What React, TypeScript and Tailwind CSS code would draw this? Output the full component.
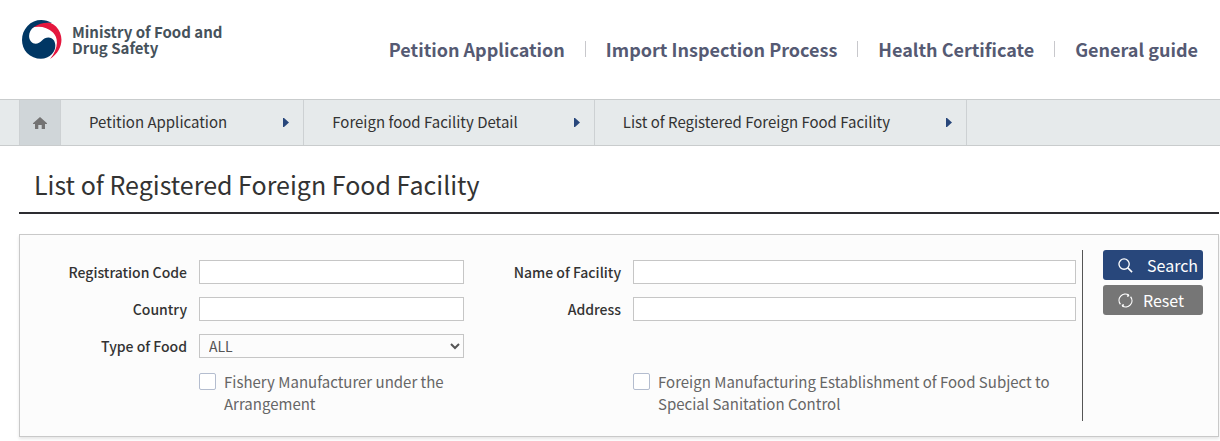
import type { ReactNode } from "react";

const navItems = [
  "Petition Application",
  "Import Inspection Process",
  "Health Certificate",
  "General guide",
];

const crumbs = [
  "Petition Application",
  "Foreign food Facility Detail",
  "List of Registered Foreign Food Facility",
];

const inputClass =
  "h-6 w-full rounded-none border border-[#c6c6c6] bg-white px-2 text-[15px] text-[#555]";

function Logo() {
  return (
    <a href="#" className="flex items-center gap-2.5">
      <svg viewBox="0 0 40 40" className="size-10 shrink-0" aria-hidden="true">
        <path
          d="M9 8C15 1 27-.5 34 6.500c8.500 8.500 7.500 24-6 32.500 7.500-9 9.500-20 3-26.500C25 6.500 16 5.500 9 8z"
          fill="#e4173e"
        />
        <path
          d="M30 3C22-1.500 12-1 5.500 6-2 14-1.500 26 5 33c7 7 19 8 25 1 4-4 4-10 2-13.500-3-4.500-9-3.500-12 0-3 3.500-8 4.500-11 1C5.500 17 7 10.500 12 7c5-4 12-5 18-4z"
          fill="#003764"
        />
      </svg>
      <span className="text-[15px] leading-4 font-bold text-[#46525b]">
        Ministry of Food and
        <br />
        Drug Safety
      </span>
    </a>
  );
}

function Header() {
  return (
    <header className="flex h-[99px] items-start justify-between px-[22px]">
      <div className="pt-5">
        <Logo />
      </div>
      <nav className="flex items-center pt-[34px]">
        {navItems.map((item, i) => (
          <div key={item} className="flex items-center">
            {i > 0 && <span className="mx-5 h-4 w-px bg-[#c8c8cc]" />}
            <a href="#" className="text-[18px] leading-[30px] font-bold text-[#555a73]">
              {item}
            </a>
          </div>
        ))}
      </nav>
    </header>
  );
}

function Breadcrumb() {
  return (
    <nav
      aria-label="Breadcrumb"
      className="flex h-[47px] border-y border-[#c9cccd] bg-[#e6eaeb] pl-[19px]"
    >
      <a
        href="#"
        aria-label="Home"
        className="flex w-[42px] items-center justify-center border-x border-[#cdd1d3] bg-[#d0d6d9]"
      >
        <svg viewBox="0 0 14 12" className="h-3 w-3.5" aria-hidden="true">
          <path d="M7 0l7 6.300v.7h-2v5H8.700V8H5.300v4H2V7H0v-.7z" fill="#737373" />
        </svg>
      </a>
      {crumbs.map((crumb) => (
        <a
          key={crumb}
          href="#"
          className="flex items-center border-r border-[#cdd1d3] pr-3.5 pl-7 text-[15px] text-[#333]"
        >
          {crumb}
          <svg viewBox="0 0 6 9" className="ml-14 h-[9px] w-1.5" aria-hidden="true">
            <path d="M0 0h1l5 4.500L1 9H0z" fill="#28477b" />
          </svg>
        </a>
      ))}
    </nav>
  );
}

function FieldLabel({ htmlFor, children }: { htmlFor: string; children: ReactNode }) {
  return (
    <label
      htmlFor={htmlFor}
      className="text-right text-[14px] leading-6 font-medium text-[#333]"
    >
      {children}
    </label>
  );
}

function CheckField({ id, children }: { id: string; children: ReactNode }) {
  return (
    <div className="flex items-start gap-2">
      <input
        id={id}
        type="checkbox"
        className="mt-0.5 size-[17px] shrink-0 appearance-none rounded-xs border border-[#b4bdcf] bg-white checked:bg-[#28477b]"
      />
      <label htmlFor={id} className="text-[15px] leading-[22px] text-[#666]">
        {children}
      </label>
    </div>
  );
}

function SearchPanel() {
  return (
    <form className="mt-5 flex border border-[#c9c9c9] bg-[#fcfcfc] p-[15px] shadow-[0_2px_3px_rgba(0,0,0,0.1)]">
      <div className="grid flex-1 grid-cols-[152px_265fr_145px_443fr] gap-x-3 gap-y-[13px] border-r border-[#555] pt-2.5 pr-1.5 pb-1.5">
        <FieldLabel htmlFor="code">Registration Code</FieldLabel>
        <input id="code" type="text" className={inputClass} />
        <FieldLabel htmlFor="facility">Name of Facility</FieldLabel>
        <input id="facility" type="text" className={inputClass} />

        <FieldLabel htmlFor="country">Country</FieldLabel>
        <input id="country" type="text" className={inputClass} />
        <FieldLabel htmlFor="address">Address</FieldLabel>
        <input id="address" type="text" className={inputClass} />

        <FieldLabel htmlFor="food">Type of Food</FieldLabel>
        <select
          id="food"
          className="h-6 w-full rounded-none border border-[#c6c6c6] bg-[#fcfcfc] pl-[5px] text-[14px] text-[#555]"
        >
          <option>ALL</option>
        </select>

        <div className="col-start-2">
          <CheckField id="fishery">Fishery Manufacturer under the Arrangement</CheckField>
        </div>
        <div className="col-start-4">
          <CheckField id="sanitation">
            Foreign Manufacturing Establishment of Food Subject to Special Sanitation Control
          </CheckField>
        </div>
      </div>

      <div className="ml-5 flex w-[100px] flex-col gap-[5px]">
        <button
          type="submit"
          className="flex h-[30px] items-center gap-3.5 rounded-[3px] bg-[#28477b] pl-[15px] text-[16px] text-white"
        >
          <svg viewBox="0 0 16 16" className="size-[15px]" fill="none" stroke="#fff" aria-hidden="true">
            <circle cx="6.500" cy="6.500" r="5.500" strokeWidth="1.400" />
            <path d="M10.500 10.500L15 15" strokeWidth="1.700" />
          </svg>
          Search
        </button>
        <button
          type="reset"
          className="flex h-[30px] items-center gap-2.5 rounded-[3px] bg-[#767676] pl-[15px] text-[16px] text-white"
        >
          <svg viewBox="0 0 16 16" className="size-[15px]" fill="none" stroke="#fff" aria-hidden="true">
            <path
              d="M2.600 12A6.700 6.700 0 0 1 11.500 2.200M13.400 4A6.700 6.700 0 0 1 4.500 13.800"
              strokeWidth="1.300"
            />
            <path d="M9.800 3.600l2-1.200M6.200 12.400l-2 1.200" strokeWidth="1.600" />
          </svg>
          Reset
        </button>
      </div>
    </form>
  );
}

export default function App() {
  return (
    <div className="bg-white font-['Noto_Sans_CJK_KR',sans-serif]">
      <Header />
      <Breadcrumb />
      <main className="pr-px pb-1 pl-[19px]">
        <h1 className="border-b-2 border-[#2d2d31] pt-[19px] pb-[9px] pl-[15px] text-[25px] leading-[38px] text-[#333]">
          List of Registered Foreign Food Facility
        </h1>
        <SearchPanel />
      </main>
    </div>
  );
}
